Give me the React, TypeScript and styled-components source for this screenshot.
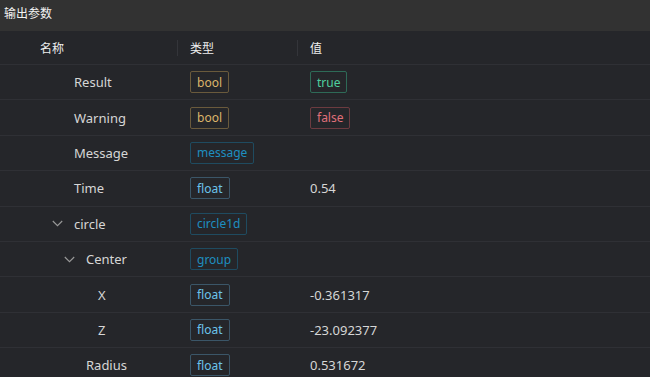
import React from "react";
import styled, { createGlobalStyle } from "styled-components";

const Global = createGlobalStyle`
  html, body { margin: 0; padding: 0; background: #25262a; }
  body { font-family: "Noto Sans", "Noto Sans CJK SC", sans-serif; }
`;

const Panel = styled.div`
  width: 650px;
  height: 377px;
  overflow: hidden;
  background: #25262a;
  display: flex;
  flex-direction: column;
`;

const TitleBar = styled.div`
  height: 31px;
  flex: none;
  background: #323232;
  color: #f2f2f2;
  font-family: "Noto Sans CJK SC", sans-serif;
  font-size: 12px;
  padding: 4px 0 0 4px;
  box-sizing: border-box;
  line-height: 18px;
`;

const Row = styled.div<{ $header?: boolean }>`
  display: grid;
  grid-template-columns: 177px 120px 1fr;
  height: ${(p) => (p.$header ? "34px" : "35.4px")};
  flex: none;
  box-sizing: border-box;
  border-bottom: 1px solid #2f3035;
  align-items: center;
`;

const HeadCell = styled.div<{ $first?: boolean }>`
  position: relative;
  height: 100%;
  display: flex;
  align-items: center;
  padding-left: ${(p) => (p.$first ? 40 : 13)}px;
  color: #eeeeee;
  font-family: "Noto Sans CJK SC", sans-serif;
  font-size: 12px;
  &::before {
    content: "";
    display: ${(p) => (p.$first ? "none" : "block")};
    position: absolute;
    left: 0;
    top: 9px;
    width: 1px;
    height: 16px;
    background: #34353a;
  }
`;

const NameCell = styled.div<{ $level: number }>`
  display: flex;
  align-items: center;
  padding-left: ${(p) => 52 + p.$level * 12}px;
  color: #d6d6d6;
  font-size: 13px;
`;

const Caret = styled.span`
  width: 22px;
  flex: none;
  display: flex;
  align-items: center;
`;

const Cell = styled.div`
  display: flex;
  align-items: center;
  padding-left: 13px;
  color: #d6d6d6;
  font-size: 13px;
`;

const tagColors: Record<string, { fg: string; bd: string }> = {
  bool: { fg: "#dcb56b", bd: "#6a5a3c" },
  true: { fg: "#4fcf9f", bd: "#2e6a57" },
  false: { fg: "#e0707a", bd: "#6c3b40" },
  dark: { fg: "#1e8fc0", bd: "#1f4b60" },
  float: { fg: "#6cc3ea", bd: "#3b5668" },
};

const Tag = styled.span<{ $kind: string }>`
  display: inline-flex;
  align-items: center;
  height: 22px;
  box-sizing: border-box;
  padding: 0 6px;
  border: 1px solid ${(p) => tagColors[p.$kind].bd};
  border-radius: 2px;
  color: ${(p) => tagColors[p.$kind].fg};
  font-size: 12px;
`;

type Item = {
  name: string;
  level: number;
  expand?: boolean;
  type: string;
  typeKind: string;
  value?: string;
  valueKind?: string;
};

const items: Item[] = [
  { name: "Result", level: 0, type: "bool", typeKind: "bool", value: "true", valueKind: "true" },
  { name: "Warning", level: 0, type: "bool", typeKind: "bool", value: "false", valueKind: "false" },
  { name: "Message", level: 0, type: "message", typeKind: "dark" },
  { name: "Time", level: 0, type: "float", typeKind: "float", value: "0.54" },
  { name: "circle", level: 0, expand: true, type: "circle1d", typeKind: "dark" },
  { name: "Center", level: 1, expand: true, type: "group", typeKind: "dark" },
  { name: "X", level: 2, type: "float", typeKind: "float", value: "-0.361317" },
  { name: "Z", level: 2, type: "float", typeKind: "float", value: "-23.092377" },
  { name: "Radius", level: 1, type: "float", typeKind: "float", value: "0.531672" },
];

const Chevron = () => (
  <svg width="11" height="7" viewBox="0 0 11 7" fill="none">
    <path d="M0.8 1 L5.5 5.7 L10.2 1" stroke="#9a9a9a" strokeWidth="1.1" />
  </svg>
);

export default function App() {
  return (
    <>
      <Global />
      <Panel>
        <TitleBar>输出参数</TitleBar>
        <Row $header>
          <HeadCell $first>名称</HeadCell>
          <HeadCell>类型</HeadCell>
          <HeadCell>值</HeadCell>
        </Row>
        {items.map((it) => (
          <Row key={it.name}>
            <NameCell $level={it.level}>
              <Caret>{it.expand ? <Chevron /> : null}</Caret>
              {it.name}
            </NameCell>
            <Cell>
              <Tag $kind={it.typeKind}>{it.type}</Tag>
            </Cell>
            <Cell>
              {it.value && it.valueKind ? (
                <Tag $kind={it.valueKind}>{it.value}</Tag>
              ) : (
                it.value
              )}
            </Cell>
          </Row>
        ))}
      </Panel>
    </>
  );
}
